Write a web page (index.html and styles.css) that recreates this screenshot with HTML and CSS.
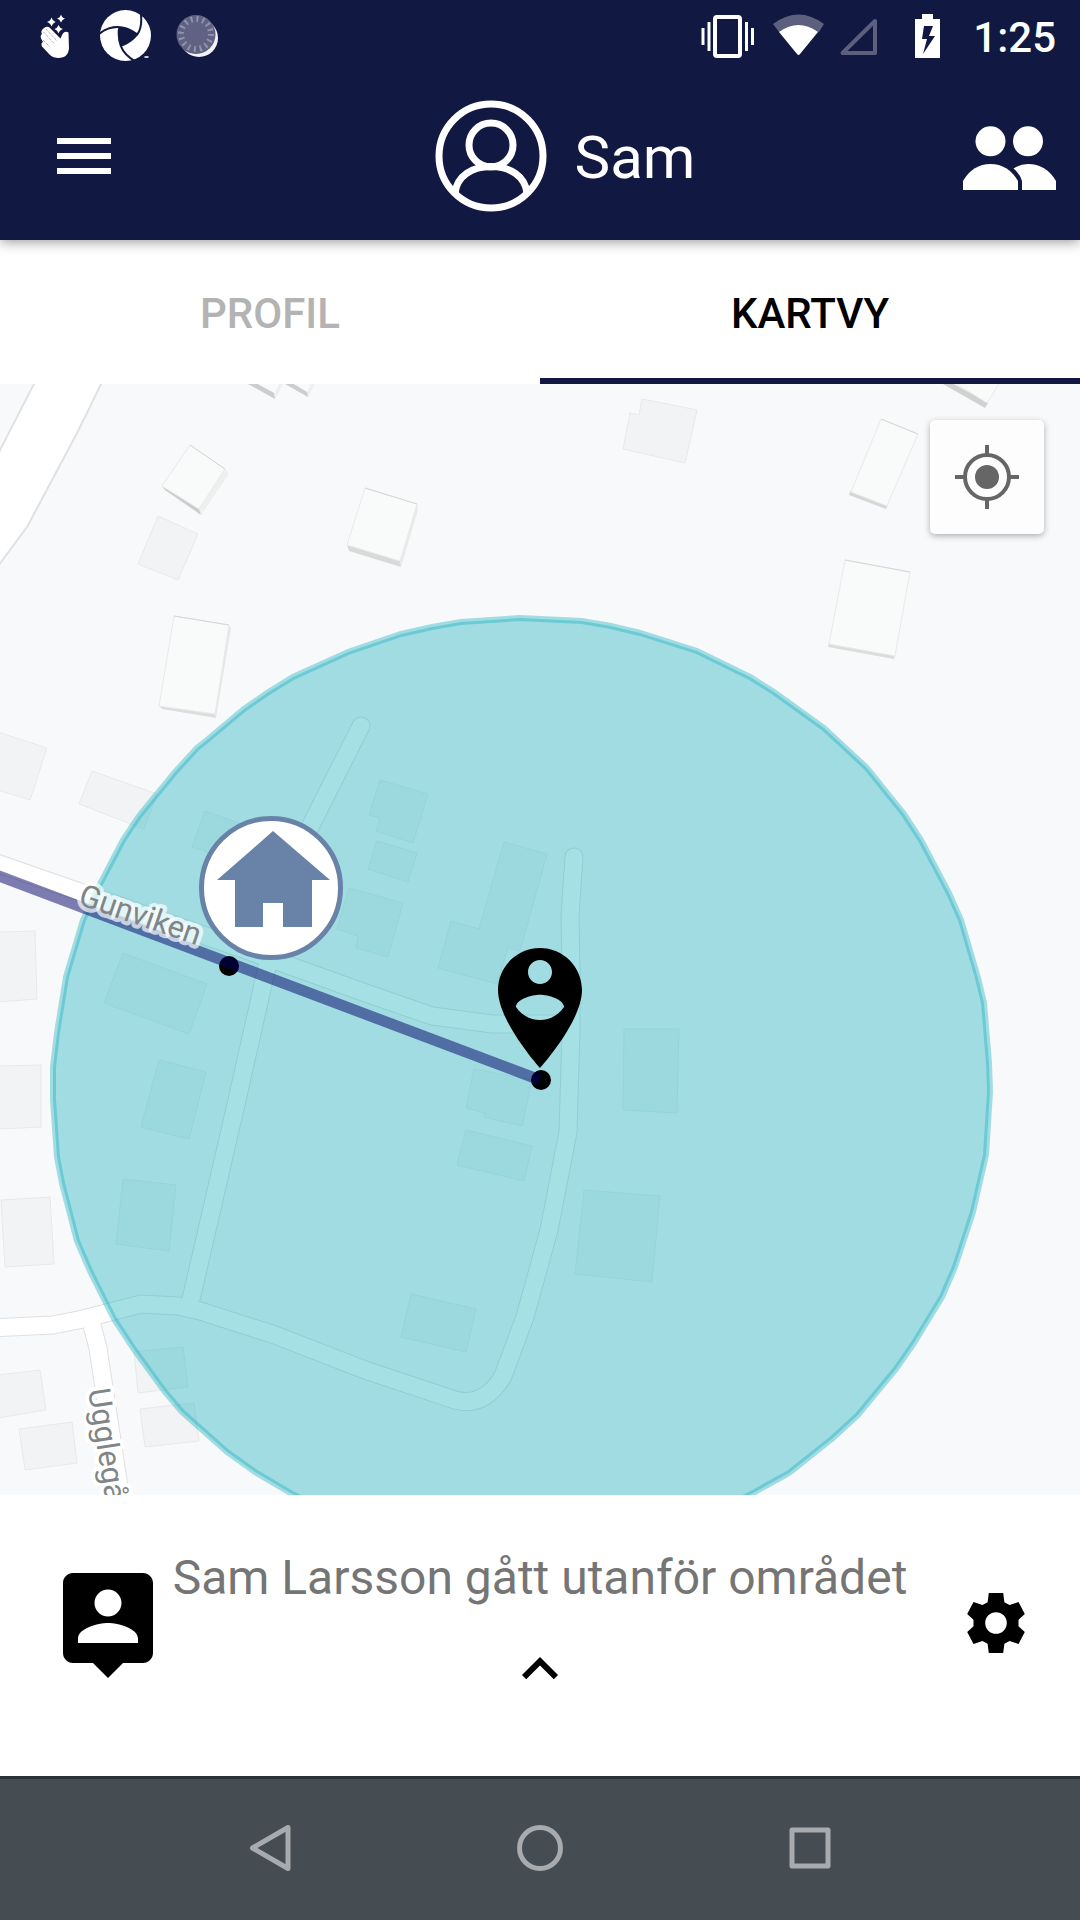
FILE: index.html
```html
<!DOCTYPE html>
<html lang="sv">
<head>
<meta charset="utf-8">
<meta name="viewport" content="width=device-width, initial-scale=1">
<title>Sam – Kartvy</title>
<link rel="stylesheet" href="styles.css">
</head>
<body class="app">

<div class="status-bar">
  <div class="status-group status-group-left">
    <svg width="36" height="72" viewBox="40 0 36 72" aria-hidden="true">
      <path fill="#fff" d="M44 28Q47.500 25.500 50 28L60.500 38.500L62.500 34Q65 30.500 68.500 32.500L69 49Q68 57.500 59 58Q53 58 50 55L42 46.500Q40.500 43 43 42L41 38.500Q40 35 42 34Q40 31 44 28Z"/>
      <path fill="none" stroke="#8d8fb0" stroke-width="1" stroke-dasharray="1 1" d="M46 29l11 12M43.500 32l11 12M43 40l7 7"/>
      <path fill="#fff" d="M51.500 17.500Q52.500 21 55.500 22Q52.500 23 51.500 26.500Q50.500 23 47 22Q50.500 21 51.500 17.500zM61 14.500Q62 18 65 18.500Q62 19.500 61 22.500Q60 19.500 57 18.500Q60 18 61 14.500zM58.500 25Q59.500 28 63 29Q59.500 30 58.500 33.500Q57.500 30 54.500 29Q57.500 28 58.500 25z"/>
    </svg>
    <svg width="51" height="72" viewBox="100 0 51 72" aria-hidden="true">
      <circle cx="125.500" cy="35.500" r="25.500" fill="#fff"/>
      <path class="cut" d="M119.300 26.700Q129 27 137.300 34.300Q130 43 120.700 45.700Q117.500 36 119.300 26.700z"/>
      <path class="cut-line" d="M99 34Q117 20 137.300 34.300M140.500 10Q143 27 137.300 34.300Q130 43 120.700 45.700M136 62Q124 55 120.700 45.700Q117.500 36 119.300 26.700"/>
      <path class="cut" d="M143 62L144 56L153 53V62z"/>
      <path stroke="#c9cad6" stroke-width="2" d="M144.500 57h4"/>
    </svg>
    <svg width="48" height="72" viewBox="175 0 48 72" aria-hidden="true">
      <circle cx="199" cy="38" r="19" fill="#fff" opacity=".95"/>
      <circle cx="196" cy="34.500" r="19.500" fill="#5f6282"/>
      <circle cx="196" cy="34" r="15" fill="none" stroke="#9193a8" stroke-width="6" stroke-dasharray="2 3.890"/>
    </svg>
  </div>
  <div class="status-group">
    <svg width="56" height="72" viewBox="702 0 56 72" aria-hidden="true">
      <rect x="716" y="17" width="25" height="39" rx="2" fill="none" stroke="#fff" stroke-width="4"/>
      <path stroke="#fff" stroke-width="3" d="M704 28v17M710 22v29M747.500 22v29M753.500 28v17"/>
    </svg>
    <svg width="51" height="72" viewBox="774 0 51 72" aria-hidden="true">
      <path fill="#5c607e" d="M774 24Q799.500 5 825 24L820 32H780z"/>
      <path fill="#fff" d="M780 32Q799.500 18 819 32L801 54Q799.500 56 798 54z"/>
    </svg>
    <svg width="57" height="72" viewBox="841 0 57 72" aria-hidden="true">
      <path fill="none" stroke="#5c607e" stroke-width="4" stroke-linejoin="round" d="M843.500 53L876 21V53z"/>
    </svg>
    <svg width="44" height="72" viewBox="914 0 44 72" aria-hidden="true">
      <path fill="#fff" fill-rule="evenodd" d="M916 19h7v-5h11v5h7v39h-25zM925 26l-2 13h5l-4 15 12-18h-6l4-10z"/>
    </svg>
    <span class="clock">1:25</span>
  </div>
</div>

<header class="header">
  <button class="icon-button" type="button" aria-label="Meny">
    <svg width="120" height="72" viewBox="0 0 120 72" aria-hidden="true">
      <path fill="#fff" d="M33 18h54v6H33zM33 33h54v6H33zM33 48h54v6H33z"/>
    </svg>
  </button>
  <div class="title">
    <svg width="112" height="112" viewBox="0 0 112 112" aria-hidden="true">
      <g fill="none" stroke="#fff" stroke-width="7">
        <circle cx="56" cy="56" r="52"/>
        <circle cx="56" cy="45" r="22"/>
        <path d="M20 93C22 76 37 66.500 56 66.500S90 76 92 93"/>
      </g>
    </svg>
    <h1 class="name">Sam</h1>
  </div>
  <button class="icon-button icon-button-end" type="button" aria-label="Kontakter">
    <svg width="94" height="72" viewBox="961 120 94 72" aria-hidden="true">
      <g fill="#fff">
        <circle cx="989.500" cy="141.300" r="15"/>
        <circle cx="1027" cy="141.300" r="15"/>
        <path d="M962 190V181Q972 164 989.500 164T1017 181V190z"/>
        <path d="M1021 190V181Q1019 174 1012.500 168.500Q1019 164 1027 164Q1045 164 1055 181V190z"/>
      </g>
    </svg>
  </button>
</header>

<nav class="tabs">
  <a class="tab" href="#profil">PROFIL</a>
  <a class="tab tab-active" href="#kartvy" aria-current="page">KARTVY</a>
</nav>

<main class="map" id="kartvy">
  <svg class="map-canvas" viewBox="0 384 1080 1111" preserveAspectRatio="xMidYMid slice" role="img" aria-label="Karta">
    <!-- flat buildings -->
    <g class="flat">
      <path d="M158 516L198 534L178 580L138 564z"/>
      <path d="M642 399L697 410L685 463L623 449L630 413L639 415z"/>
      <path d="M-2 732L47 748L30 800L-2 790z"/>
      <path d="M92 771L157 794L144 829L79 804z"/>
      <path d="M205 811L253 828L242 863L192 847z"/>
      <path d="M-2 932L35 931L37 999L-2 1002z"/>
      <path d="M-2 1066L41 1065V1127L-2 1129z"/>
      <path d="M123 953L207 984L189 1034L104 1003z"/>
      <path d="M159 1060L206 1072L189 1139L141 1127z"/>
      <path d="M380 780L428 794L413 843L376 831L380 818L369 815z"/>
      <path d="M377 841L417 853L408 882L368 869z"/>
      <path d="M349 888L403 903L388 957L356 948L358 936L337 929z"/>
      <path d="M504 842L547 854L520 951L508 948L497 984L438 968L451 921L479 929z"/>
      <path d="M624 1029H679L677 1113L623 1110z"/>
      <path d="M474 1069L532 1080L522 1126L484 1117L485 1113L466 1108z"/>
      <path d="M466 1130L532 1146L524 1181L457 1165z"/>
      <path d="M411 1294L476 1309L466 1352L401 1337z"/>
      <path d="M584 1190L660 1196L652 1282L575 1274z"/>
      <path d="M123 1179L176 1185L169 1251L116 1244z"/>
      <path d="M1 1200L50 1197L54 1264L5 1267z"/>
      <path d="M134 1352L183 1347L188 1387L138 1393z"/>
      <path d="M140 1409L194 1403L199 1441L145 1447z"/>
      <path d="M-2 1375L40 1370L46 1410L-2 1418z"/>
      <path d="M19 1429L72 1422L77 1463L25 1470z"/>
    </g>
    <!-- raised buildings: dark side, light side, roof -->
    <g>
      <path fill="#cdcdcd" d="M248 384L275 399L276 394L258 384zM285 384L308 397L309 392L294 384z"/>
      <path fill="#efefef" d="M275 399L283 384H277L274 394zM308 397L315 384H309L307 392z"/>
      <path fill="#f9fbfa" d="M258 384L275 393L279 384zM294 384L307 392L311 384z"/>
      <path fill="#cbcccb" d="M162 486L165 490L201 515L200 508z"/>
      <path fill="#efefef" d="M225 469L229 474L201 515L199 509z"/>
      <path class="roof" d="M190 445L225 469L199 509L162 486z"/>
      <path class="ridge" d="M190 445L225 469"/>
      <path fill="#d8d9d8" d="M347 545L349 551L401 567L400 560z"/>
      <path fill="#e9eae9" d="M417 504L418 510L401 567L400 561z"/>
      <path class="roof" d="M365 488L417 504L400 561L347 545z"/>
      <path class="ridge" d="M365 488L417 504"/>
      <path fill="#dcdddc" d="M159 705L162 709L216 718L215 713z"/>
      <path fill="#e6e7e6" d="M229 625L231 628L216 718L214 714z"/>
      <path class="roof" d="M174 616L229 625L215 714L159 706z"/>
      <path class="ridge" d="M174 616L229 625"/>
      <path fill="#d5d6d5" d="M850 491L849 495L886 509L888 505z"/>
      <path class="roof" d="M881 419L918 434L887 506L851 492z"/>
      <path class="ridge" d="M881 419L918 434"/>
      <path fill="#dcdcdc" d="M829 643L828 647L894 659L895 655z"/>
      <path class="roof" d="M845 560L910 572L895 656L829 644z"/>
      <path class="ridge" d="M845 560L910 572"/>
      <path fill="#d0d1d0" d="M943 384L985 408L988 403L954 384z"/>
      <path class="roof" d="M954 382L987 403L1000 382z"/>
    </g>
    <!-- roads -->
    <path class="trunk" d="M36 380L-2 454V566L27 527L76 435L87 413L103 380z"/>
    <g class="road-edge">
      <path d="M-9 861L260 955L360 991L432 1016L492 1024H571M361 726L311 825L250 950M269 958L237 1100L189 1308M-9 1328L53 1325L83 1319L141 1304L178 1306L200 1311L275 1335L365 1370L455 1400Q484 1408 503 1376L525 1317L549 1230L568 1132L571 1030V970L570 917L574 857M90 1318L98 1348L121 1500"/>
    </g>
    <g class="road">
      <path d="M-9 861L260 955L360 991L432 1016L492 1024H571M361 726L311 825L250 950M269 958L237 1100L189 1308M-9 1328L53 1325L83 1319L141 1304L178 1306L200 1311L275 1335L365 1370L455 1400Q484 1408 503 1376L525 1317L549 1230L568 1132L571 1030V970L570 917L574 857M90 1318L98 1348L121 1500"/>
    </g>
    <!-- safe zone -->
    <path class="zone" d="M520 618L461 622L432 627L401 634L348 652L293 677L267 693L244 709L207 740L197 748L175 772L139 816L123 840L100 884L83 920L66 977L57 1033L53 1067V1100L57 1157L62 1183L77 1241L90 1271L114 1319L133 1348L165 1392L182 1412L227 1452L255 1472L294 1495L350 1522L521 1555L700 1520L753 1493L789 1473L833 1438L858 1415L896 1369L914 1343L942 1297L955 1267L973 1212L986 1155L990 1092L989 1063L984 1003L978 978L961 920L949 893L921 840L904 814L867 768L824 728L774 692L750 677L697 651L640 633L611 626L582 621z"/>
    <!-- track -->
    <circle cx="229" cy="966" r="10"/>
    <circle cx="541" cy="1080" r="10"/>
    <path class="track" d="M-6 874L540 1080"/>
    <!-- street names -->
    <text class="street street-veil" transform="translate(77 904) rotate(19)">Gunviken</text>
    <text class="street" transform="translate(88 1390) rotate(81)">Ugglegå</text>
    <!-- home marker -->
    <circle cx="271" cy="888" r="69.500" fill="#fff" stroke="#6983a8" stroke-width="5"/>
    <path fill="#6983a8" d="M273 831L330 880H312V927H283V903H263V927H235V880H217z"/>
    <!-- person marker -->
    <path transform="translate(468 936) scale(6)" d="M12 2C8.140 2 5 5.140 5 9c0 5.250 7 13 7 13s7-7.750 7-13c0-3.860-3.140-7-7-7zm0 2c1.100 0 2 .9 2 2 0 1.110-.9 2-2 2s-2-.89-2-2c0-1.100.9-2 2-2zm0 10c-1.670 0-3.140-.85-4-2.150.02-1.320 2.670-2.050 4-2.050s3.980.73 4 2.050c-.86 1.300-2.330 2.150-4 2.150z"/>
  </svg>
  <button class="locate" type="button" aria-label="Min position">
    <svg width="64" height="64" viewBox="0 0 64 64" aria-hidden="true">
      <g fill="none" stroke="#666" stroke-width="4">
        <circle cx="32" cy="32" r="22"/>
        <path d="M32 0v9M32 55v9M0 32h9M55 32h9"/>
      </g>
      <circle cx="32" cy="32" r="12" fill="#666"/>
    </svg>
  </button>
</main>

<section class="panel">
  <button class="icon-button" type="button" aria-label="Visa person">
    <svg width="120" height="120" viewBox="0 0 24 24" aria-hidden="true">
      <path d="M19 2H5c-1.110 0-2 .9-2 2v14c0 1.100.89 2 2 2h4l3 3 3-3h4c1.100 0 2-.9 2-2V4c0-1.100-.9-2-2-2zm-7 3.300c1.490 0 2.700 1.210 2.700 2.700s-1.210 2.700-2.700 2.700S9.300 9.490 9.300 8s1.210-2.700 2.700-2.700zM18 16H6v-.9c0-2 4-3.100 6-3.100s6 1.100 6 3.100v.9z"/>
    </svg>
  </button>
  <div class="panel-center">
    <p class="message">Sam Larsson gått utanför området</p>
    <button class="icon-button" type="button" aria-label="Visa mer">
      <svg width="72" height="54" viewBox="0 3 24 18" aria-hidden="true">
        <path d="M12 8l-6 6 1.410 1.410L12 10.830l4.590 4.580L18 14z"/>
      </svg>
    </button>
  </div>
  <button class="icon-button icon-button-end" type="button" aria-label="Inställningar">
    <svg width="72" height="72" viewBox="0 0 24 24" aria-hidden="true">
      <path fill-rule="evenodd" d="M9.600 2H14.400L14.800 5.100L16.500 6L19.500 5L21.600 9L19.500 10.900V13.100L21.600 15L19.500 19L16.500 18L14.800 18.900L14.400 22H9.600L9.200 18.900L7.500 18L4.500 19L2.400 15L4.500 13.100V10.900L2.400 9L4.500 5L7.500 6L9.200 5.100zM12 8.400a3.600 3.600 0 1 0 0 7.200a3.600 3.600 0 1 0 0-7.200z"/>
    </svg>
  </button>
</section>

<footer class="nav-bar">
  <button class="icon-button" type="button" aria-label="Tillbaka">
    <svg class="nav-icon" width="48" height="48" viewBox="0 0 48 48" aria-hidden="true"><path d="M42 3.500V44.500L6.500 24z"/></svg>
  </button>
  <button class="icon-button" type="button" aria-label="Hem">
    <svg class="nav-icon" width="48" height="48" viewBox="0 0 48 48" aria-hidden="true"><circle cx="24" cy="24" r="20.500"/></svg>
  </button>
  <button class="icon-button" type="button" aria-label="Översikt">
    <svg class="nav-icon" width="48" height="48" viewBox="0 0 48 48" aria-hidden="true"><rect x="6" y="6" width="36" height="36"/></svg>
  </button>
</footer>

</body>
</html>
```
FILE: styles.css
```css
* {
  box-sizing: border-box;
}

body {
  margin: 0;
}

svg {
  display: block;
}

.app {
  display: flex;
  flex-direction: column;
  min-height: 100vh;
  background: #fff;
  font-family: Roboto, "Liberation Sans", sans-serif;
}

.icon-button {
  display: block;
  padding: 0;
  border: 0;
  background: none;
}

.icon-button-end {
  justify-self: end;
}

/* system status bar */
.status-bar {
  position: relative;
  z-index: 2;
  display: flex;
  justify-content: space-between;
  height: 72px;
  padding: 0 24px 0 40px;
  background: #111841;
  color: #fff;
}

.status-group {
  display: flex;
  align-items: center;
  gap: 16px;
}

.status-group-left {
  gap: 24px;
}

.cut {
  fill: #111841;
}

.cut-line {
  fill: none;
  stroke: #111841;
  stroke-width: 2;
}

.clock {
  padding-top: 4px;
  font-size: 42px;
  font-weight: 500;
  line-height: 72px;
}

/* app header */
.header {
  position: relative;
  z-index: 1;
  display: grid;
  grid-template-columns: 1fr auto 1fr;
  align-items: center;
  height: 168px;
  padding: 0 24px;
  background: #111841;
  color: #fff;
  box-shadow: 0 2px 12px rgba(0, 0, 0, 0.4);
}

.title {
  display: flex;
  align-items: center;
  gap: 28px;
  padding-left: 50px;
}

.name {
  margin: 0;
  padding-top: 4px;
  font-size: 60px;
  font-weight: 400;
  line-height: 72px;
}

/* tabs */
.tabs {
  display: grid;
  grid-template-columns: 1fr 1fr;
  height: 144px;
}

.tab {
  padding-top: 10px;
  border-bottom: 6px solid transparent;
  color: #b3b3b3;
  font-size: 42px;
  font-weight: 500;
  line-height: 128px;
  text-align: center;
  text-decoration: none;
}

.tab-active {
  border-color: #111841;
  color: #000;
}

/* map */
.map {
  position: relative;
  display: flex;
  flex: 1;
  background: #f8f9fb;
}

.map-canvas {
  flex: 1;
  min-width: 0;
}

.flat {
  fill: #f1f3f4;
  stroke: #e8e9eb;
}

.roof {
  fill: #f9fbfa;
  stroke: #e9eaea;
}

.ridge {
  stroke: #d5d6d6;
}

.trunk {
  fill: #fff;
  stroke: #e0e1e3;
  stroke-width: 2;
}

.road-edge {
  fill: none;
  stroke: #dfe0e2;
  stroke-width: 19;
  stroke-linecap: round;
}

.road {
  fill: none;
  stroke: #fff;
  stroke-width: 17;
  stroke-linecap: round;
}

.zone {
  fill: rgba(24, 176, 187, 0.39);
  stroke: rgba(24, 176, 187, 0.39);
  stroke-width: 6;
}

.track {
  stroke: rgba(0, 0, 101, 0.5);
  stroke-width: 11;
}

.street {
  fill: #808587;
  stroke: #fff;
  stroke-width: 8;
  stroke-linejoin: round;
  paint-order: stroke;
  font-size: 31px;
}

.street-veil {
  stroke: rgba(255, 255, 255, 0.7);
}

.locate {
  position: absolute;
  top: 36px;
  right: 36px;
  display: grid;
  place-items: center;
  width: 114px;
  height: 114px;
  padding: 0;
  border: 0;
  border-radius: 5px;
  background: #fdfdfd;
  box-shadow: 0 2px 6px rgba(0, 0, 0, 0.3);
}

/* message panel */
.panel {
  display: grid;
  grid-template-columns: 120px 1fr 120px;
  align-items: center;
  padding: 55px 48px 80px;
}

.panel-center {
  display: flex;
  flex-direction: column;
  align-items: center;
  gap: 36px;
}

.message {
  margin: 0;
  color: #757575;
  font-size: 48px;
  line-height: 56px;
  text-align: center;
}

/* system navigation */
.nav-bar {
  display: flex;
  justify-content: center;
  align-items: center;
  gap: 222px;
  height: 144px;
  background: #454c52;
  box-shadow: inset 0 3px #2b3235;
}

.nav-icon {
  fill: none;
  stroke: #a7abad;
  stroke-width: 5;
  stroke-linejoin: round;
}
```
